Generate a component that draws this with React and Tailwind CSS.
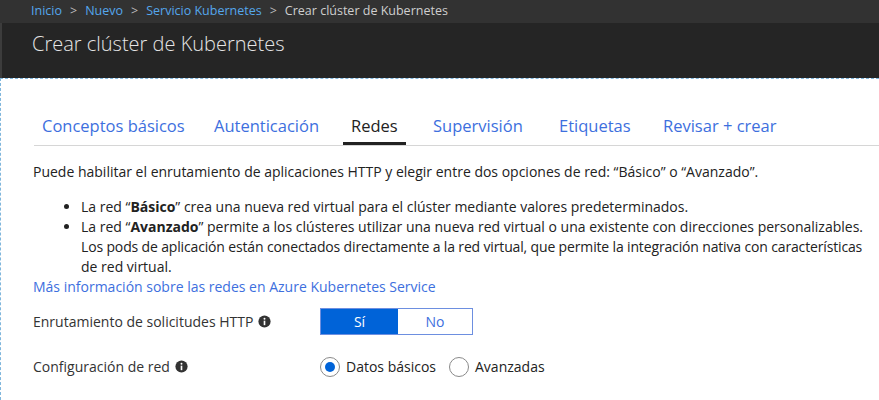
import React, { useState } from "react";

function Info() {
  return (
    <svg width="13" height="13" viewBox="0 0 16 16" className="inline-block ml-[5px] -mt-[3px]">
      <circle cx="8" cy="8" r="7.5" fill="#333" />
      <rect x="7" y="7" width="2" height="5.5" fill="#fff" />
      <circle cx="8" cy="4.6" r="1.2" fill="#fff" />
    </svg>
  );
}

function Radio({ checked, label, onClick }) {
  return (
    <button onClick={onClick} className="flex items-center gap-[6px]">
      <span className="w-[20px] h-[20px] rounded-full border border-[#8a8a8a] flex items-center justify-center bg-white">
        {checked && <span className="w-[10px] h-[10px] rounded-full bg-[#0063d8]" />}
      </span>
      <span className="text-[14px] text-[#222]">{label}</span>
    </button>
  );
}

const tabs = [
  { t: "Conceptos básicos", w: "w-[172px]" },
  { t: "Autenticación", w: "w-[137px]" },
  { t: "Redes", w: "w-[82px]" },
  { t: "Supervisión", w: "w-[126px]" },
  { t: "Etiquetas", w: "w-[104px]" },
  { t: "Revisar + crear", w: "w-[140px]" },
];

export default function App() {
  const [http, setHttp] = useState(true);
  const [net, setNet] = useState("basic");

  return (
    <div className="w-[879px] h-[400px] overflow-hidden bg-white" style={{ fontFamily: '"Open Sans", "Noto Sans", sans-serif' }}>
      <div className="h-[23px] bg-[#323232] flex items-center pl-[31px] text-[12.5px] gap-[8px]">
        <a className="text-[#55a7ec]">Inicio</a>
        <span className="text-[#bbb]">&gt;</span>
        <a className="text-[#55a7ec]">Nuevo</a>
        <span className="text-[#bbb]">&gt;</span>
        <a className="text-[#55a7ec]">Servicio Kubernetes</a>
        <span className="text-[#bbb]">&gt;</span>
        <span className="text-[#cfcfcf]">Crear clúster de Kubernetes</span>
      </div>
      <div className="h-[55px] bg-[#252525] flex items-start pl-[30px] pt-[6px] border-l-2 border-[#3c3c3c]">
        <h1 className="text-[20px] font-light text-[#e6e6e6]">Crear clúster de Kubernetes</h1>
      </div>
      <div className="border-t border-dashed border-[#7fb6dc] border-l h-[322px]">
        <div className="ml-[33px] pt-[33px] flex border-b border-[#d6d6d6] h-[67px] items-end">
          {tabs.map(({ t, w }) => (
            <div key={t} className={w + " flex shrink-0"}>
              <span
                className={
                  "text-[16.5px] px-[8px] " +
                  (t === "Redes" ? "text-[#222] border-b-[3px] border-[#222] pb-[3px]" : "text-[#3d6fde] pb-[6px]")
                }
              >
                {t}
              </span>
            </div>
          ))}
        </div>
        <div className="pl-[32px] text-[14px] text-[#222] leading-[20px]">
          <p className="mt-[16px]">
            Puede habilitar el enrutamiento de aplicaciones HTTP y elegir entre dos opciones de red: “Básico” o “Avanzado”.
          </p>
          <ul className="mt-[15px] pl-[48px] list-disc whitespace-nowrap">
            <li>
              La red “<b>Básico</b>” crea una nueva red virtual para el clúster mediante valores predeterminados.
            </li>
            <li>
              La red “<b>Avanzado</b>” permite a los clústeres utilizar una nueva red virtual o una existente con direcciones personalizables.
              <br />
              <span className="tracking-[-0.15px]">
                Los pods de aplicación están conectados directamente a la red virtual, que permite la integración nativa con características
              </span>
              <br />
              de red virtual.
            </li>
          </ul>
          <a className="text-[#3d6fde] block">Más información sobre las redes en Azure Kubernetes Service</a>
        </div>
        <div className="pl-[32px] flex items-center mt-[11px]">
          <div className="w-[287px] text-[14px] text-[#333]">
            Enrutamiento de solicitudes HTTP<Info />
          </div>
          <div className="flex h-[27px] border border-[#6d8fe0]">
            <button
              onClick={() => setHttp(true)}
              className={"w-[77px] text-[14px] " + (http ? "bg-[#0063d8] text-white" : "bg-white text-[#3d6fde]")}
            >
              Sí
            </button>
            <button
              onClick={() => setHttp(false)}
              className={"w-[74px] text-[14px] " + (!http ? "bg-[#0063d8] text-white" : "bg-white text-[#3d6fde]")}
            >
              No
            </button>
          </div>
        </div>
        <div className="pl-[32px] flex items-center mt-[21px]">
          <div className="w-[287px] text-[14px] text-[#333]">
            Configuración de red<Info />
          </div>
          <div className="flex items-center gap-[13px]">
            <Radio checked={net === "basic"} label="Datos básicos" onClick={() => setNet("basic")} />
            <Radio checked={net === "adv"} label="Avanzadas" onClick={() => setNet("adv")} />
          </div>
        </div>
      </div>
    </div>
  );
}
